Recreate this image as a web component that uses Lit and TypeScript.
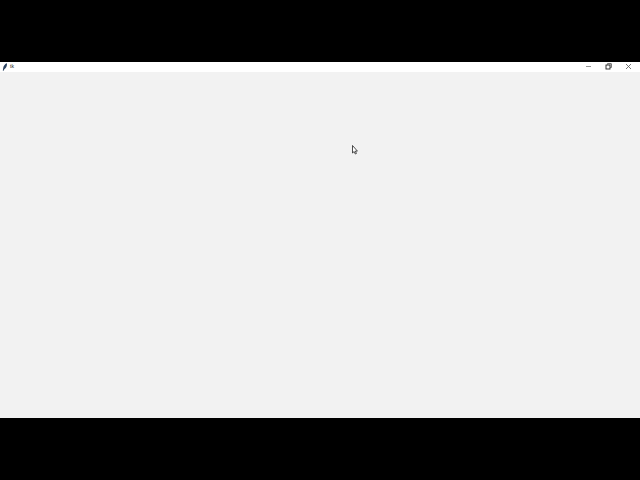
import { LitElement, html, css } from "lit";
import { customElement } from "lit/decorators.js";

@customElement("app-root")
export class AppRoot extends LitElement {
  static styles = css`
    :host { display: flex; flex-direction: column; width: 640px; height: 480px; background: #000; overflow: hidden; }
    .spacer-top { height: 62px; flex: none; }
    .spacer-bottom { height: 62px; flex: none; }
    .window { flex: 1; display: flex; flex-direction: column; background: #f2f2f2; }
    .titlebar { height: 10px; box-sizing: border-box; padding: 0 2px 1px 2px; flex: none; background: #fff; display: flex; align-items: center; }
    .feather { width: 6px; height: 8px; flex: none; display: block; }
    .title { font: 5px "Liberation Sans", sans-serif; color: #222; margin-left: 2px; line-height: 9px; }
    .controls { margin-left: auto; display: flex; }
    .ctl { width: 20px; height: 9px; display: flex; align-items: center; justify-content: center; }
    .ctl svg { width: 7px; height: 7px; display: block; }
    .content { flex: 1; position: relative; }
    .cursor { position: absolute; left: 352px; top: 73px; width: 6px; height: 10px; }
  `;

  render() {
    return html`
      <div class="spacer-top"></div>
      <div class="window">
        <div class="titlebar">
          <svg class="feather" viewBox="0 0 6 8">
            <path d="M5 .2C3.2 .6 1.6 2.6 1.2 5L.8 7.8 1.6 7.8 2.3 6.2C4 5.4 5.2 3 5 .2Z" fill="#2b4260"/>
          </svg>
          <span class="title">tk</span>
          <div class="controls">
            <div class="ctl">
              <svg viewBox="0 0 7 7"><path d="M1 3.5H6" stroke="#777" stroke-width=".8" fill="none"/></svg>
            </div>
            <div class="ctl">
              <svg viewBox="0 0 7 7">
                <path d="M2.5 1.5V.7H6.3V4.5H5.4" stroke="#333" stroke-width=".8" fill="none"/>
                <rect x="1" y="2" width="4" height="4" stroke="#222" stroke-width=".9" fill="none"/>
              </svg>
            </div>
            <div class="ctl">
              <svg viewBox="0 0 7 7"><path d="M1 1L6 6M6 1L1 6" stroke="#555" stroke-width=".8" fill="none"/></svg>
            </div>
          </div>
        </div>
        <div class="content">
          <svg class="cursor" viewBox="0 0 6 10">
            <path d="M.5 .5V8L2.2 6.5 3.3 9 4.4 8.5 3.4 6.1H5.4Z" fill="#fff" stroke="#222" stroke-width=".8" stroke-linejoin="round"/>
          </svg>
        </div>
      </div>
      <div class="spacer-bottom"></div>
    `;
  }
}
